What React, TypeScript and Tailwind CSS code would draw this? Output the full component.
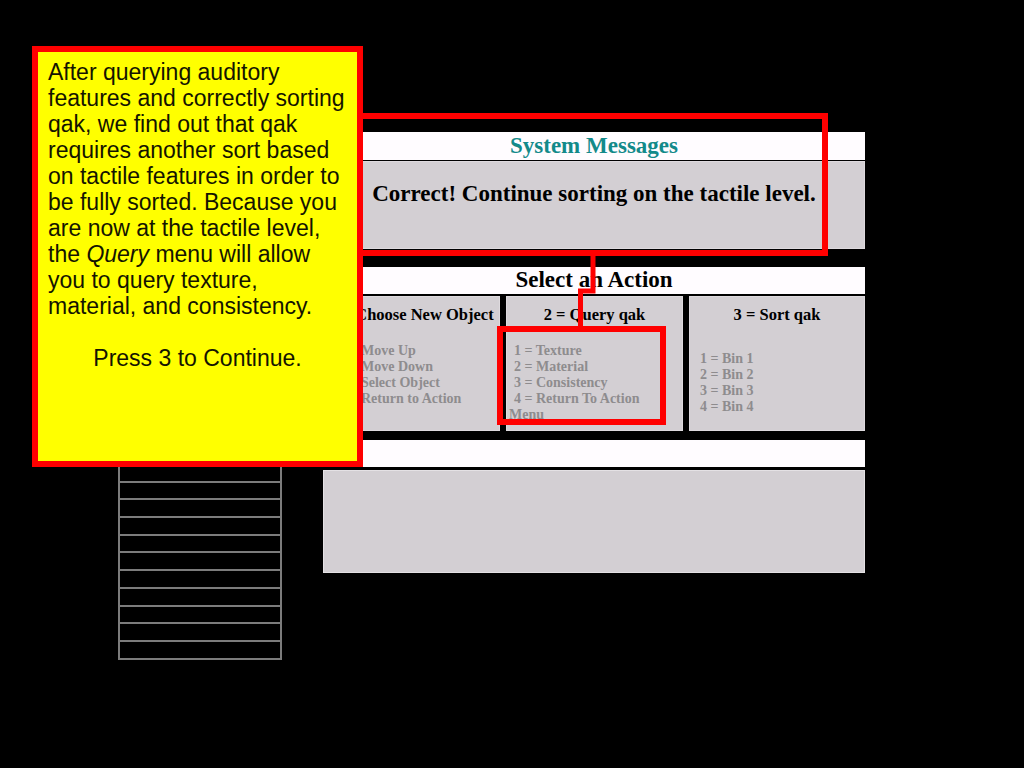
import React from 'react';

const serif = { fontFamily: '"Liberation Serif", "Times New Roman", serif' };
const sans = { fontFamily: '"Liberation Sans", Arial, sans-serif' };

const queryItems = ['1 = Texture', '2 = Material', '3 = Consistency', '4 = Return To Action'];
const moveItems = ['1 = Move Up', '2 = Move Down', '3 = Select Object', '4 = Return to Action'];
const binItems = ['1 = Bin 1', '2 = Bin 2', '3 = Bin 3', '4 = Bin 4'];

const ActionColumn: React.FC<{
  title: string;
  items: string[];
  wrapped?: string;
  width: string;
  itemsClass: string;
  itemPad: string;
}> = ({ title, items, wrapped, width, itemsClass, itemPad }) => (
  <div className={`${width} h-full bg-[#d3cfd3] border border-[#dedade] pt-[8px] px-[2px]`}>
    <div className="text-center text-[16.5px] font-bold leading-[19px] text-black">{title}</div>
    <div className={`${itemsClass} text-[14px] font-bold leading-[16px] text-[#8e8c8e]`}>
      {items.map((it) => (
        <div key={it} className={itemPad}>
          {it}
        </div>
      ))}
      {wrapped && <div>{wrapped}</div>}
    </div>
  </div>
);

export default function App() {
  return (
    <div className="relative w-[1024px] h-[768px] bg-black overflow-hidden flex" style={serif}>
      {/* ladder column */}
      <div className="w-[323px] pl-[118px] pt-[465px]">
        <div className="w-[164px] border-x-2 border-[#7c7c7c]">
          {Array.from({ length: 11 }).map((_, i) => (
            <div key={i} className="h-[17.7px] border-b-2 border-[#7c7c7c]" />
          ))}
        </div>
      </div>

      {/* panels */}
      <div className="w-[542px] pt-[132px] flex flex-col">
        {/* System Messages */}
        <div className="h-[28px] bg-[#fffcff] flex items-center justify-center text-[23px] font-bold text-[#138a8a]">
          System Messages
        </div>
        <div className="mt-[1px] h-[88px] bg-[#d3cfd3] border border-[#dedade] pt-[19px] text-center text-[23px] font-bold leading-[26px] text-black">
          Correct! Continue sorting on the tactile level.
        </div>

        {/* Select an Action */}
        <div className="mt-[18px] h-[27px] bg-[#fffcff] flex items-center justify-center text-[23px] font-bold text-black">
          Select an Action
        </div>
        <div className="mt-[2px] h-[135px] flex">
          <ActionColumn
            title="1 = Choose New Object"
            items={moveItems}
            wrapped="Menu"
            width="w-[177px]"
            itemsClass="mt-[19px]"
            itemPad="pl-[13px]"
          />
          <div className="w-[6px]" />
          <ActionColumn
            title="2 = Query qak"
            items={queryItems}
            wrapped="Menu"
            width="w-[177px]"
            itemsClass="mt-[19px]"
            itemPad="pl-[5px]"
          />
          <div className="w-[6px]" />
          <ActionColumn
            title="3 = Sort qak"
            items={binItems}
            width="w-[176px]"
            itemsClass="mt-[27px]"
            itemPad="pl-[8px]"
          />
        </div>

        {/* empty panel */}
        <div className="mt-[9px] h-[27px] bg-[#fffcff]" />
        <div className="mt-[3px] h-[103px] bg-[#d3cfd3] border border-[#e4e1e4]" />
      </div>

      {/* callout outlines */}
      <div className="absolute left-[357px] top-[113px] w-[471px] h-[143px] border-[6px] border-[#ff0000]" />
      <div className="absolute left-[497px] top-[326px] w-[169px] h-[99px] border-[6px] border-[#ff0000]" />
      <svg className="absolute left-0 top-0 pointer-events-none" width="1024" height="768">
        <path d="M593 254 V291 H580.5 V328" fill="none" stroke="#ff0000" strokeWidth="5" />
      </svg>

      {/* tutorial note */}
      <div
        className="absolute left-[32px] top-[46px] w-[331px] h-[421px] bg-[#ffff00] border-[6px] border-[#ff0000] px-[10px] pt-[7px] text-[23px] leading-[26px] text-[#141400]"
        style={sans}
      >
        <p>
          After querying auditory features and correctly sorting qak, we find out that qak requires another sort
          based on tactile features in order to be fully sorted. Because you are now at the tactile level, the{' '}
          <i>Query</i> menu will allow you to query texture, material, and consistency.
        </p>
        <p className="mt-[26px] text-center">Press 3 to Continue.</p>
      </div>
    </div>
  );
}
